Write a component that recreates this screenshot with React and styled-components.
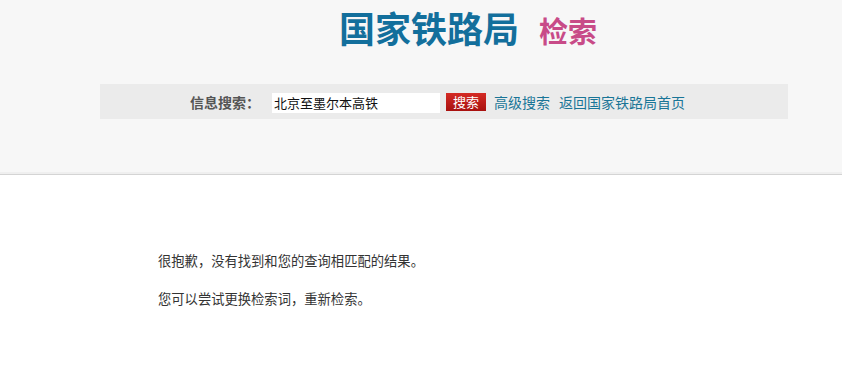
import React from 'react';
import styled, { createGlobalStyle } from 'styled-components';

const GlobalStyle = createGlobalStyle`
  html, body {
    margin: 0;
    padding: 0;
    background: #fff;
    font-family: "Noto Sans CJK SC", "Noto Sans", sans-serif;
  }
`;

const Header = styled.div`
  background: #f7f7f7;
  height: 175px;
  border-bottom: 1px solid #d4d4d4;
  box-shadow: 0 -2px 0 #efefef inset;
  box-sizing: border-box;
  padding-top: 7px;
`;

const TitleRow = styled.div`
  display: flex;
  align-items: baseline;
  gap: 20px;
  padding-left: 339px;
  height: 40px;
`;

const SiteName = styled.h1`
  margin: 0;
  font-size: 36px;
  line-height: 40px;
  font-weight: 700;
  color: #136f9c;
`;

const SubName = styled.span`
  font-size: 29px;
  line-height: 40px;
  font-weight: 700;
  color: #c84b88;
`;

const SearchBar = styled.div`
  margin: 37px 54px 0 100px;
  height: 35px;
  background: #ebebeb;
  display: flex;
  align-items: center;
  padding-left: 90px;
  font-size: 14px;
`;

const Label = styled.span`
  font-weight: 700;
  color: #555;
  width: 82px;
  flex: none;
`;

const Input = styled.div`
  width: 166px;
  height: 20px;
  background: #fff;
  font-size: 13px;
  line-height: 20px;
  color: #111;
  padding-left: 2px;
  margin-top: 2px;
`;

const Button = styled.span`
  margin-left: 6px;
  width: 40px;
  height: 18px;
  background: linear-gradient(#d42a24, #a8110f);
  color: #fff;
  font-size: 13px;
  line-height: 18px;
  text-align: center;
  margin-top: 1px;
`;

const Link = styled.a`
  color: #197597;
  text-decoration: none;
  margin-left: ${p => p.gap}px;
  font-size: 14px;
`;

const Body = styled.div`
  padding: 76px 0 0 158px;
  font-size: 13.3px;
  color: #333;
`;

const Para = styled.p`
  margin: 0 0 18px;
  line-height: 20px;
`;

export default function App() {
  return (
    <>
      <GlobalStyle />
      <Header>
        <TitleRow>
          <SiteName>国家铁路局</SiteName>
          <SubName>检索</SubName>
        </TitleRow>
        <SearchBar>
          <Label>信息搜索：</Label>
          <Input>北京至墨尔本高铁</Input>
          <Button>搜索</Button>
          <Link gap={8}>高级搜索</Link>
          <Link gap={9}>返回国家铁路局首页</Link>
        </SearchBar>
      </Header>
      <Body>
        <Para>很抱歉，没有找到和您的查询相匹配的结果。</Para>
        <Para>您可以尝试更换检索词，重新检索。</Para>
      </Body>
    </>
  );
}
